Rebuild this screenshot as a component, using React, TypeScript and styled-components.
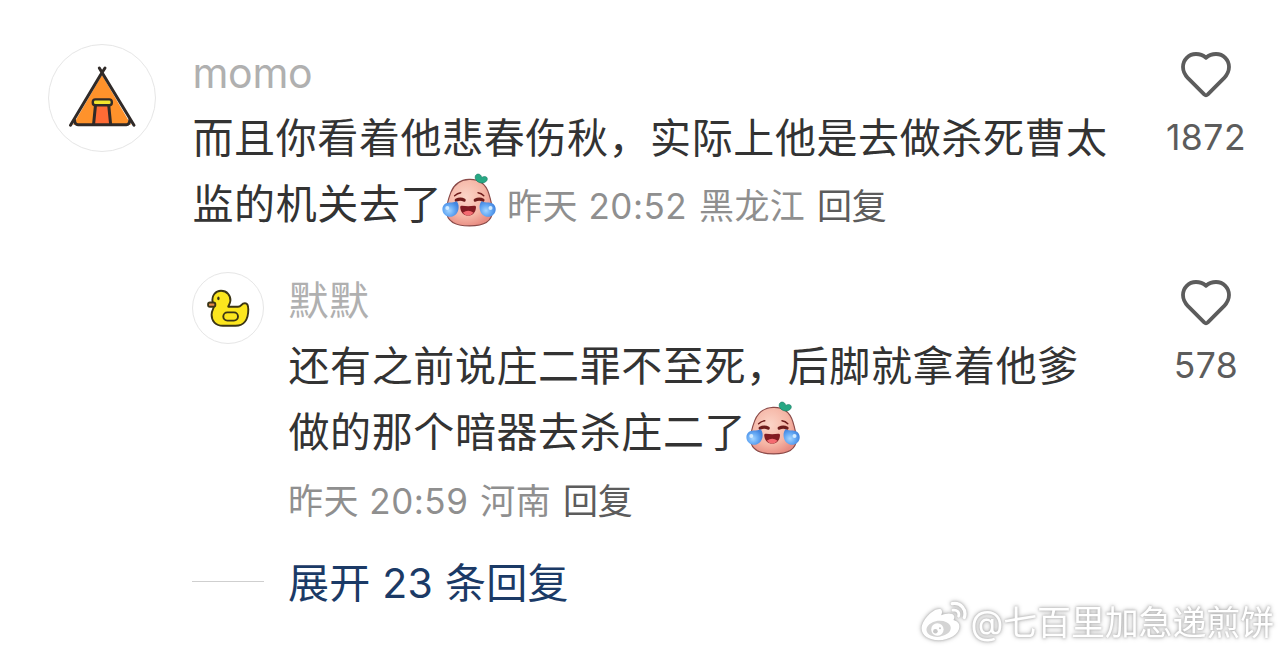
import React from "react";
import styled, { createGlobalStyle } from "styled-components";

const palette = {
  text: "#333333",
  name: "#b0b0b0",
  meta: "#8f8f8f",
  action: "#5c5c5c",
  link: "#1b3a66",
  border: "#e6e6e6",
  rule: "#cfcfcf",
};

const GlobalStyle = createGlobalStyle`
  body {
    margin: 0;
    background: #fff;
    font-family: Inter, "Noto Sans CJK SC", sans-serif;
  }
`;

const Page = styled.main`
  position: relative;
  box-sizing: border-box;
  width: 1284px;
  height: 653px;
  padding: 44px 38px 0 48px;
  overflow: hidden;
  background: #fff;
`;

const CommentRow = styled.article<{ $reply?: boolean }>`
  display: flex;
  align-items: flex-start;
  height: ${({ $reply }) => ($reply ? 273 : 228)}px;
  padding-left: ${({ $reply }) => ($reply ? 144 : 0)}px;
`;

const Avatar = styled.div<{ $size: number }>`
  box-sizing: border-box;
  flex: none;
  width: ${({ $size }) => $size}px;
  height: ${({ $size }) => $size}px;
  border: 1px solid ${palette.border};
  border-radius: 50%;

  svg {
    display: block;
    margin: -1px;
  }
`;

const CommentBody = styled.div<{ $gap: number }>`
  flex: 1;
  min-width: 0;
  margin-left: ${({ $gap }) => $gap}px;
  white-space: nowrap;
`;

const UserName = styled.div<{ $latin?: boolean }>`
  height: 61px;
  padding-left: 0.5px;
  color: ${palette.name};
  font-size: ${({ $latin }) => ($latin ? 41 : 40)}px;
  line-height: 58px;
  letter-spacing: ${({ $latin }) => ($latin ? -0.3 : 0.5)}px;
`;

const TextLine = styled.div`
  display: flex;
  align-items: center;
  height: 66px;
  padding-left: 0.5px;
  color: ${palette.text};
  font-size: 41px;
  line-height: 66px;
  letter-spacing: 0.6px;

  svg {
    margin-top: -8px;
  }
`;

const Meta = styled.div<{ $inline?: boolean }>`
  display: flex;
  gap: 12px;
  margin-left: ${({ $inline }) => ($inline ? 11 : 0)}px;
  padding-top: ${({ $inline }) => ($inline ? 3 : 1)}px;
  color: ${palette.meta};
  font-size: 35px;
  line-height: ${({ $inline }) => ($inline ? 66 : 70)}px;
  letter-spacing: 0.3px;
`;

const MetaTime = styled.span`
  letter-spacing: 0.5px;
`;

const ReplyAction = styled.span`
  color: ${palette.action};
  letter-spacing: -0.2px;
`;

const LikeColumn = styled.div`
  display: flex;
  flex-direction: column;
  align-items: center;
  flex: none;
  width: 80px;
  padding-top: 8px;
  color: ${palette.action};
`;

const LikeCount = styled.span`
  margin-top: 17px;
  font-size: 35.5px;
  line-height: 46px;
  letter-spacing: 0.5px;
`;

const ExpandRow = styled.div`
  display: flex;
  align-items: center;
  height: 72px;
  padding-left: 144px;
  color: ${palette.link};
  font-size: 41px;
  line-height: 72px;
  letter-spacing: 0.25px;
  white-space: nowrap;
`;

const ExpandLabel = styled.span`
  padding-top: 3px;
`;

const Rule = styled.span`
  width: 72px;
  height: 1px;
  margin-right: 24px;
  background: ${palette.rule};
`;

const Watermark = styled.div`
  position: absolute;
  right: 10px;
  bottom: 5px;
  display: flex;
  align-items: center;
  gap: 3px;
  color: #fff;
  font-size: 34px;
  line-height: 50px;
  letter-spacing: -0.15px;
  white-space: nowrap;
  filter: drop-shadow(0 0 1px #b4b4b4) drop-shadow(0 0 2px #b8b8b8);

  svg {
    margin-top: -2px;
  }
`;

const HeartIcon = () => (
  <svg width="50" height="46" viewBox="0 0 50 46" fill="none">
    <path
      d="M25 5.7C21.8 3 18.4 2 15 2C7.6 2 2 7.8 2 15C2 19.8 4 23 7 26.2L23.2 42.4Q25 44 26.8 42.4L43 26.2C46 23 48 19.8 48 15C48 7.8 42.4 2 35 2C31.6 2 28.2 3 25 5.7Z"
      stroke="currentColor"
      strokeWidth="3.8"
      strokeLinejoin="round"
    />
  </svg>
);

const TentIcon = () => (
  <svg width="108" height="108" viewBox="0 0 108 108" fill="none">
    <path d="M54 31L25 80.7H83Z" fill="#ff922b" />
    <path d="M47.5 60H60.7L63 80.7H45.2Z" fill="#ff6b35" />
    <g stroke="#302a28" strokeWidth="3" strokeLinecap="round" strokeLinejoin="round">
      <path d="M57 24L52.5 31L22.5 81.2" />
      <path d="M51.3 24L55.5 31L86 81.2" />
      <path d="M26.5 76Q26.8 80.7 30 80.7H78.4Q81.5 80.7 81.8 76" />
      <path d="M47.5 61L45.6 80.2M60.7 61L62.6 80.2" />
    </g>
    <rect x="44.8" y="55.4" width="19" height="5.9" rx="2.6" fill="#f2e52d" stroke="#302a28" strokeWidth="2.4" />
  </svg>
);

const DuckIcon = () => (
  <svg width="72" height="72" viewBox="0 0 72 72" fill="none">
    <g stroke="#3b3515" strokeWidth="1.9" strokeLinecap="round" strokeLinejoin="round">
      <path
        d="M20.6 30C19.5 23.5 23.5 18.8 29 18.8C35 18.8 38.8 23.5 38.4 28.8C38.2 31 37.2 32.5 36.2 34.7H46C49.8 34.7 48.8 31.2 53 31.2C55.8 31.2 56.3 34 56.3 37.5C56.3 47.5 52 53.8 43.5 53.8H31C23.5 53.8 19.6 49 19.6 42.8C19.6 38 22 36.2 22.4 33Z"
        fill="#fce61e"
      />
      <rect x="16.1" y="30.5" width="7.2" height="4.2" rx="1.8" fill="#e98b48" />
      <rect x="31.3" y="40.4" width="14.7" height="8.2" rx="4.1" />
    </g>
    <ellipse cx="26.4" cy="26.4" rx="1.2" ry="1.8" fill="#3b3515" />
  </svg>
);

const LaughCryEmoji = ({ id }: { id: string }) => (
  <svg width="54" height="54" viewBox="0 0 54 54" fill="none">
    <defs>
      <radialGradient id={`${id}-skin`} cx="0.42" cy="0.38" r="0.65">
        <stop offset="0" stopColor="#fbd5c8" />
        <stop offset="0.65" stopColor="#f5b5a5" />
        <stop offset="1" stopColor="#e88c82" />
      </radialGradient>
      <radialGradient id={`${id}-tear`} cx="0.4" cy="0.6" r="0.6">
        <stop offset="0" stopColor="#a5d5ff" />
        <stop offset="0.55" stopColor="#66aaf5" />
        <stop offset="1" stopColor="#4385df" />
      </radialGradient>
    </defs>
    <path
      d="M27 6.4C38 6 43.8 11 46.8 20.5C48.8 27 50.3 32 50.3 38C50.3 49.2 40 52.9 27.7 52.9C15 52.9 4.6 49.2 4.6 38C4.6 31.5 6.5 25.5 8.8 19.5C12.2 10.8 18 6.8 27 6.4Z"
      fill={`url(#${id}-skin)`}
      stroke="#8a4a48"
      strokeWidth="1.1"
    />
    <path
      d="M37.3 9.5C32.6 7.7 32.2 2.8 34.6 1.4C37 .4 39.3 1.8 39.7 4.6C42 2.7 45.1 3.4 45.3 5.7C45.4 8.9 41 11 37.3 9.5Z"
      fill="#27a884"
      stroke="#16775f"
      strokeWidth="0.6"
    />
    <g stroke="#6f1c1b" strokeLinecap="round">
      <path d="M12.6 22.7Q15.4 20.2 18.8 19.7M36 19.7Q39.5 20.2 41.8 22.7" strokeWidth="1.4" />
      <path d="M14.2 27.2Q18.5 25 22.2 27.2M33.2 27.2Q37.3 25 41 27.2" strokeWidth="3.1" />
    </g>
    <path d="M18.2 34.2Q18.2 32.6 20 32.8Q26.2 33.6 32.2 32.8Q34 32.6 34 34.2C33.7 39.2 31 42.6 26.2 42.6C21.4 42.6 18.6 39.2 18.2 34.2Z" fill="#821b22" />
    <path d="M20.8 39.7Q26.2 35.7 31.6 39.7Q29.5 42.4 26.2 42.4Q22.9 42.4 20.8 39.7Z" fill="#f46a70" />
    <path
      d="M14.8 28.2C17 31 16.8 34 16.4 36.5C15.5 40.8 12.3 43.8 8.2 43.8C3.8 43.8.4 40.4.4 36.2C.4 32 3.7 29.6 7.6 29.5C10.3 29.4 12.8 29.2 14.8 28.2Z"
      fill={`url(#${id}-tear)`}
    />
    <path
      d="M39.4 28.2C37.2 31 37.4 34 37.8 36.5C38.7 40.8 41.9 43.8 46 43.8C50.4 43.8 53.7 40.4 53.7 36.2C53.7 32 50.5 29.6 46.6 29.5C43.9 29.4 41.4 29.2 39.4 28.2Z"
      fill={`url(#${id}-tear)`}
    />
    <circle cx="5.3" cy="35" r="2" fill="#d3ebff" />
    <circle cx="48.5" cy="35" r="2" fill="#d3ebff" />
  </svg>
);

const WeiboIcon = () => (
  <svg width="48" height="42" viewBox="0 0 48 42" fill="none">
    <path
      d="M20 8C22.8 8.6 22.2 12 21.2 14.2C26 12 33 11.3 34.2 15C34.8 17 33.4 19 33.4 19C37 20 39.6 22 39.4 26C39 33 30 39.2 18.5 39.2C9 39.2 1.6 34.5 1.6 27.5C1.6 19 13.5 6.8 20 8Z"
      fill="currentColor"
    />
    <ellipse cx="18.6" cy="27.8" rx="12.2" ry="8" transform="rotate(-7 18.6 27.8)" fill="#d4d4d4" />
    <circle cx="17.4" cy="28.5" r="6.2" fill="currentColor" />
    <circle cx="15.4" cy="30.3" r="2.3" fill="#c8c8c8" />
    <circle cx="20" cy="27.2" r="1" fill="#c8c8c8" />
    <g stroke="currentColor" strokeLinecap="round">
      <path d="M32.3 2.7C40.5 1 47 8.5 44.3 16.5" strokeWidth="3.3" />
      <path d="M33 9.2C37 8.4 39.8 11.4 38.6 15.2" strokeWidth="2.8" />
    </g>
  </svg>
);

const LikeButton: React.FC<{ count: number }> = ({ count }) => (
  <LikeColumn>
    <HeartIcon />
    <LikeCount>{count}</LikeCount>
  </LikeColumn>
);

export default function App() {
  return (
    <>
      <GlobalStyle />
      <Page>
        <CommentRow>
          <Avatar $size={108}>
            <TentIcon />
          </Avatar>
          <CommentBody $gap={36}>
            <UserName $latin>momo</UserName>
            <TextLine>而且你看着他悲春伤秋，实际上他是去做杀死曹太</TextLine>
            <TextLine>
              监的机关去了
              <LaughCryEmoji id="first" />
              <Meta $inline>
                <MetaTime>昨天 20:52</MetaTime>
                <span>黑龙江</span>
                <ReplyAction>回复</ReplyAction>
              </Meta>
            </TextLine>
          </CommentBody>
          <LikeButton count={1872} />
        </CommentRow>

        <CommentRow $reply>
          <Avatar $size={72}>
            <DuckIcon />
          </Avatar>
          <CommentBody $gap={24}>
            <UserName>默默</UserName>
            <TextLine>还有之前说庄二罪不至死，后脚就拿着他爹</TextLine>
            <TextLine>
              做的那个暗器去杀庄二了
              <LaughCryEmoji id="second" />
            </TextLine>
            <Meta>
              <MetaTime>昨天 20:59</MetaTime>
              <span>河南</span>
              <ReplyAction>回复</ReplyAction>
            </Meta>
          </CommentBody>
          <LikeButton count={578} />
        </CommentRow>

        <ExpandRow>
          <Rule />
          <ExpandLabel>展开 23 条回复</ExpandLabel>
        </ExpandRow>

        <Watermark>
          <WeiboIcon />
          <span>@七百里加急递煎饼</span>
        </Watermark>
      </Page>
    </>
  );
}
